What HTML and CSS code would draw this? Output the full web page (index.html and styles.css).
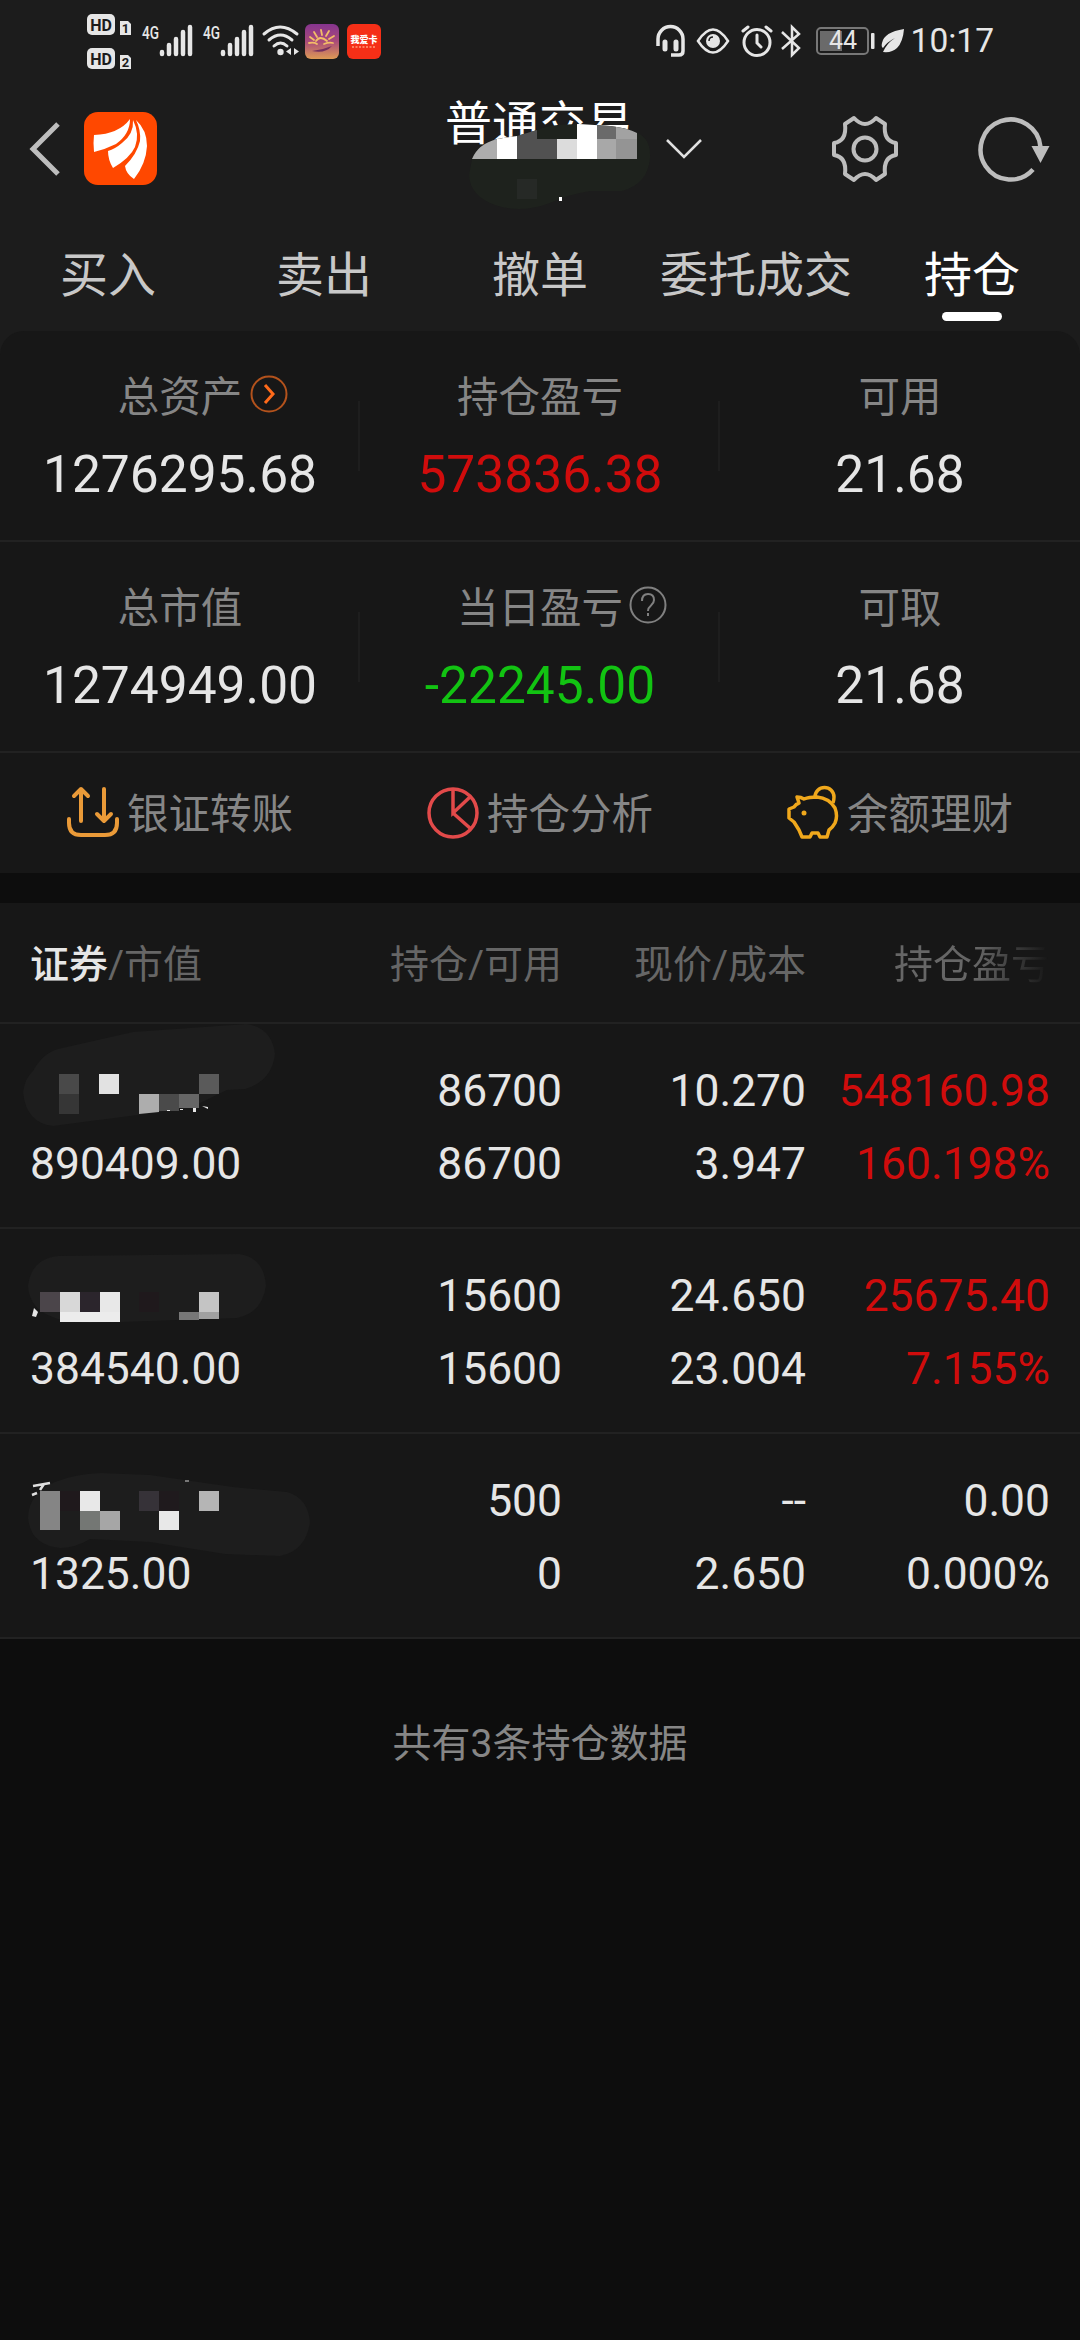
FILE: index.html
```html
<!DOCTYPE html>
<html lang="zh-CN">
<head>
    <meta charset="UTF-8">
    <meta name="viewport" content="width=device-width, initial-scale=1.0">
    <title>普通交易 - 持仓</title>
    <link rel="stylesheet" href="styles.css">
</head>
<body>
    <header>
        <div class="status-bar">
            <div class="status-left">
                <svg class="sim" width="46" height="60" viewBox="0 0 46 60">
                    <rect x="0" y="3" width="28" height="21" rx="5" fill="#e6e6e6"/>
                    <text x="14" y="19.500" class="hd">HD</text>
                    <path d="M33 10h8l3 3v11H33z" fill="#e6e6e6"/>
                    <text x="38.500" y="22" class="sim-no">1</text>
                    <rect x="0" y="37" width="28" height="21" rx="5" fill="#e6e6e6"/>
                    <text x="14" y="53.500" class="hd">HD</text>
                    <path d="M33 44h8l3 3v11H33z" fill="#e6e6e6"/>
                    <text x="38.500" y="56" class="sim-no">2</text>
                </svg>
                <svg class="signal" width="52" height="34" viewBox="0 0 52 34">
                    <text x="0" y="15" class="net" textLength="17" lengthAdjust="spacingAndGlyphs">4G</text>
                    <path d="M20 28v2M27 21v9M34 15v15M41 8v22M48 3v27"/>
                </svg>
                <svg class="signal" width="52" height="34" viewBox="0 0 52 34">
                    <text x="0" y="15" class="net" textLength="17" lengthAdjust="spacingAndGlyphs">4G</text>
                    <path d="M20 28v2M27 21v9M34 15v15M41 8v22M48 3v27"/>
                </svg>
                <svg class="wifi" width="38" height="34" viewBox="0 0 38 34">
                    <path d="M2 10q16-14 33 0M7 16q11.500-10 23 0M12 22q6.500-6 13 0" fill="none" stroke="#e6e6e6" stroke-width="3" stroke-linecap="round"/>
                    <circle cx="18.500" cy="28" r="3.200" fill="#e6e6e6"/>
                    <path d="M29 24v7l-5-3.500zM32 24v7l5-3.500z" fill="#e6e6e6"/>
                </svg>
                <svg width="34" height="35" viewBox="0 0 34 35">
                    <defs>
                        <linearGradient id="dusk" x1="0.500" y1="0" x2="0.500" y2="1">
                            <stop offset="0" stop-color="#86348f"/>
                            <stop offset="0.500" stop-color="#a94b79"/>
                            <stop offset="1" stop-color="#dd9a55"/>
                        </linearGradient>
                    </defs>
                    <rect width="34" height="35" rx="6" fill="url(#dusk)"/>
                    <path d="M5 13l4 3M9 8l3 5M16 6l1 5M24 7l-3 5M29 12l-5 3M4 19q5-1 8 1M11 17q4-6 11 0M19 20q5-2 9-1" fill="none" stroke="#f3bd67" stroke-width="1.800" stroke-linecap="round"/>
                    <path d="M7 27q10-1 20-5-7 8-20 5z" fill="#76305f"/>
                </svg>
                <svg class="badge-app" width="34" height="35" viewBox="0 0 34 35">
                    <rect width="34" height="35" rx="6" fill="#f52f17"/>
                    <text x="17" y="19" class="app-name" textLength="27">我爱卡</text>
                    <path d="M5 23h24" stroke="#ff9a7a" stroke-width="1.500" stroke-dasharray="2 1.500"/>
                </svg>
            </div>
            <div class="status-right">
                <svg width="30" height="34" viewBox="0 0 30 34" fill="none" stroke="#e6e6e6" stroke-width="3.500">
                    <path d="M2 22V15a12.500 12.500 0 0 1 25 0V27q0 4-4 4h-8"/>
                    <path d="M9 18v7M20 18v7" stroke-width="5" stroke-linecap="round"/>
                </svg>
                <svg class="eye" width="34" height="34" viewBox="0 0 34 34">
                    <path d="M2 17q15-23 30 0-15 23-30 0z" fill="none" stroke="#e6e6e6" stroke-width="2.500"/>
                    <circle cx="17" cy="17" r="7" fill="#e6e6e6"/>
                    <path d="M13 17q0-4 4-4" fill="none" stroke="#1c1c1c" stroke-width="1.500"/>
                </svg>
                <svg class="alarm" width="32" height="34" viewBox="0 0 32 34" fill="none" stroke="#e6e6e6" stroke-width="3" stroke-linecap="round">
                    <circle cx="16" cy="18.500" r="13"/>
                    <path d="M16 11v8l4 4M2 7l5-4M30 7l-5-4"/>
                </svg>
                <svg class="bluetooth" width="22" height="34" viewBox="0 0 22 34" fill="none" stroke="#e6e6e6" stroke-width="2.500">
                    <path d="M2 8l17 16-7 7V3l7 7L2 25"/>
                </svg>
                <svg class="battery" width="60" height="30" viewBox="0 0 60 30">
                    <rect x="1" y="2" width="51" height="26" rx="4" fill="none" stroke="#777" stroke-width="2"/>
                    <rect x="4" y="5" width="22" height="20" fill="#6a6a6a"/>
                    <rect x="55" y="7" width="3.500" height="16" rx="1" fill="#e6e6e6"/>
                    <text x="27" y="23" class="battery-text">44</text>
                </svg>
                <svg class="leaf" width="24" height="26" viewBox="0 0 24 26">
                    <path d="M23 1Q3 4 1 15q-1 4 1 5 4-6 12-10-8 5-12 14 9 1 14-4 6-6 7-19z" fill="#e6e6e6"/>
                </svg>
                <span class="time">10:17</span>
            </div>
        </div>

        <div class="nav">
            <svg class="back" width="30" height="56" viewBox="0 0 30 56">
                <path d="M28 3L3 28l25 25" fill="none" stroke="#bdbdbd" stroke-width="5"/>
            </svg>
            <svg class="logo" width="73" height="73" viewBox="0 0 73 73">
                <rect width="73" height="73" rx="14" fill="#ff4800"/>
                <path d="M10 23Q35 22 46 7 46 22 32 32 22 37 10 40 9 31 10 23z" fill="#fff"/>
                <path d="M49 8Q50 22 38 31 31 37 24 39 24 48 29 56 46 46 51 35 56 22 49 8z" fill="#fff"/>
                <path d="M52 8Q63 18 63 34 62 52 50 67 42 62 41 54 53 42 56 29 57 18 52 8z" fill="#fff"/>
            </svg>
            <h1>普通交易</h1>
            <svg class="chevron" width="38" height="22" viewBox="0 0 38 22">
                <path d="M2 2l17 17L36 2" fill="none" stroke="#e0e0e0" stroke-width="2.500"/>
            </svg>
            <svg class="gear" width="68" height="68" viewBox="-34 -34 68 68" fill="none" stroke="#bdbdbd" stroke-width="4" stroke-linejoin="round">
                <path d="M-11 -31Q0 -19 11 -31L20 -25Q18 -8 31 -6V6Q18 8 20 25L11 31Q0 19 -11 31L-20 25Q-18 8 -31 6V-6Q-18 -8 -20 -25Z"/>
                <circle r="11.500"/>
            </svg>
            <svg class="refresh" width="72" height="68" viewBox="0 0 72 68">
                <path d="M55 54.500A30 30 0 1 1 62.500 32" fill="none" stroke="#bdbdbd" stroke-width="4.500"/>
                <path d="M53.500 31h18l-9 17z" fill="#bdbdbd"/>
            </svg>
            <svg class="title-mask" width="184" height="92" viewBox="468 120 184 92">
                <defs>
                    <clipPath id="title-blob">
                        <path d="M472 159Q478 144 497 139L517 136 537 130Q550 124 579 124L610 126Q628 128 637 133 651 138 650 158 648 184 622 191L590 191Q570 194 550 203 520 214 495 205 470 196 469 175z"/>
                    </clipPath>
                </defs>
                <g clip-path="url(#title-blob)" shape-rendering="crispEdges">
                    <rect x="468" y="120" width="184" height="92" fill="#1e221d"/>
                    <rect x="468" y="120" width="29" height="39" fill="#adadad"/>
                    <rect x="497" y="120" width="20" height="39" fill="#fff"/>
                    <rect x="517" y="120" width="20" height="39" fill="#515151"/>
                    <rect x="537" y="139" width="20" height="20" fill="#515151"/>
                    <rect x="557" y="139" width="20" height="20" fill="#dcdcdc"/>
                    <rect x="577" y="120" width="20" height="39" fill="#fff"/>
                    <rect x="597" y="120" width="19" height="19" fill="#6a6a6a"/>
                    <rect x="597" y="139" width="19" height="20" fill="#a8a8a8"/>
                    <rect x="616" y="120" width="21" height="19" fill="#a2a2a2"/>
                    <rect x="616" y="139" width="21" height="20" fill="#949494"/>
                    <rect x="517" y="179" width="20" height="20" fill="#262926"/>
                </g>
                <rect x="559" y="197" width="3" height="4" fill="#fff"/>
            </svg>
        </div>

        <nav class="tabs">
            <a>买入</a>
            <a>卖出</a>
            <a>撤单</a>
            <a>委托成交</a>
            <a class="active">持仓</a>
        </nav>
    </header>

    <section class="summary">
        <div class="summary-row">
            <div class="cell">
                <div class="label">总资产
                    <svg class="label-icon more" width="38" height="38" viewBox="0 0 38 38" fill="none">
                        <circle cx="19" cy="19" r="17.500" stroke="#b3521c" stroke-width="2"/>
                        <path d="M15 10l8 9-8 9" stroke="#ff6a1a" stroke-width="3"/>
                    </svg>
                </div>
                <div class="value">1276295.68</div>
            </div>
            <div class="cell">
                <div class="label">持仓盈亏</div>
                <div class="value up">573836.38</div>
            </div>
            <div class="cell">
                <div class="label">可用</div>
                <div class="value">21.68</div>
            </div>
        </div>
        <div class="summary-row">
            <div class="cell">
                <div class="label">总市值</div>
                <div class="value">1274949.00</div>
            </div>
            <div class="cell">
                <div class="label">当日盈亏
                    <svg class="label-icon help" width="38" height="38" viewBox="0 0 38 38" fill="none" stroke="#808080" stroke-width="2">
                        <circle cx="19" cy="19" r="17.500"/>
                        <path d="M13 15q0-7 6-7t6 6q0 3-3 5.500t-3 5.500M19 27v3"/>
                    </svg>
                </div>
                <div class="value down">-22245.00</div>
            </div>
            <div class="cell">
                <div class="label">可取</div>
                <div class="value">21.68</div>
            </div>
        </div>
        <div class="actions">
            <div class="action">
                <svg width="52" height="54" viewBox="0 0 52 54" fill="none" stroke="#ea9a38" stroke-width="4" stroke-linecap="round" stroke-linejoin="round">
                    <path d="M14 35V3M7 10l7-7 7 7M37 3v32M30 28l7 7 7-7M2 33v4q0 12 12 12h24q12 0 12-12v-4"/>
                </svg>
                <span>银证转账</span>
            </div>
            <div class="action">
                <svg width="52" height="54" viewBox="0 0 52 54" fill="none" stroke="#e24a4a" stroke-width="3.500">
                    <circle cx="26" cy="27" r="24"/>
                    <path d="M26 3v24L43 11M26 27l18 16"/>
                </svg>
                <span>持仓分析</span>
            </div>
            <div class="action">
                <svg width="52" height="54" viewBox="0 0 52 54" fill="none" stroke="#f0a81c" stroke-width="3.500" stroke-linejoin="round">
                    <path d="M10 11q4 0 7 2 5-2 13-2 12 1 18 11 3 8 0 15-2 4-6 7l-2 7h-7l-2-4h-6l-2 4h-8l-3-7-5-8-5-4v-9l5-2q2-3 5-4z"/>
                    <path d="M28 11a9.500 9.500 0 0 1 19 0q0 3-1 6"/>
                    <circle cx="17" cy="27" r="2.500" fill="#f0a81c" stroke="none"/>
                </svg>
                <span>余额理财</span>
            </div>
        </div>
    </section>

    <section class="holdings">
        <div class="holdings-head">
            <span><b>证券</b>/市值</span>
            <span>持仓/可用</span>
            <span>现价/成本</span>
            <span class="faded">持仓盈亏</span>
        </div>

        <div class="holding">
            <svg class="name-mask" width="320" height="130" viewBox="0 0 320 130">
                <path d="M23 69Q25 55 33 48 43 30 58 26L133 9 247 1Q272 5 275 31 272 58 245 66L227 67 200 80 160 89 53 103Q26 100 23 69z" fill="#1d1d1d"/>
                <g shape-rendering="crispEdges">
                    <rect x="59" y="51" width="20" height="20" fill="#494949"/>
                    <rect x="59" y="71" width="20" height="20" fill="#363636"/>
                    <rect x="99" y="51" width="20" height="20" fill="#e2e2e2"/>
                    <rect x="159" y="71" width="20" height="17" fill="#4a4a4a"/>
                    <rect x="179" y="71" width="20" height="14" fill="#666"/>
                    <rect x="199" y="51" width="20" height="20" fill="#5a5a5a"/>
                </g>
                <path d="M139 71h20v18l-20 2z" fill="#adadad"/>
                <path d="M193 85h3v4h-3zM202 83l6 1v2zM167 87h3v1h-3zM180 86h3v1h-3z" fill="#e6e6e6"/>
            </svg>
            <div class="col name"><span></span><span>890409.00</span></div>
            <div class="col"><span>86700</span><span>86700</span></div>
            <div class="col"><span>10.270</span><span>3.947</span></div>
            <div class="col up"><span>548160.98</span><span>160.198%</span></div>
        </div>

        <div class="holding">
            <svg class="name-mask" width="320" height="130" viewBox="0 0 320 130">
                <path d="M28 58Q31 31 58 28L239 26Q264 29 266 58 262 85 237 90L90 95Q30 94 28 58z" fill="#1d1d1d"/>
                <g shape-rendering="crispEdges">
                    <rect x="40" y="64" width="20" height="20" fill="#4b454a"/>
                    <rect x="60" y="64" width="20" height="20" fill="#d8d8d8"/>
                    <rect x="80" y="64" width="20" height="20" fill="#2b252c"/>
                    <rect x="100" y="64" width="20" height="20" fill="#e8e8e8"/>
                    <rect x="60" y="84" width="60" height="10" fill="#ececec"/>
                    <rect x="139" y="64" width="20" height="20" fill="#1f191c"/>
                    <rect x="199" y="64" width="20" height="20" fill="#c4c4c4"/>
                    <rect x="179" y="84" width="20" height="8" fill="#777"/>
                    <rect x="199" y="84" width="20" height="7" fill="#a0a0a0"/>
                </g>
                <path d="M34 80l4 4-2 5-4-1z" fill="#e6e6e6"/>
            </svg>
            <div class="col name"><span></span><span>384540.00</span></div>
            <div class="col"><span>15600</span><span>15600</span></div>
            <div class="col"><span>24.650</span><span>23.004</span></div>
            <div class="col up"><span>25675.40</span><span>7.155%</span></div>
        </div>

        <div class="holding">
            <svg class="name-mask" width="320" height="130" viewBox="0 0 320 130">
                <path d="M28 84Q29 60 55 49 75 41 100 40L150 42 233 54 287 59Q308 65 310 89 306 118 280 123L225 121 150 109 90 106Q75 115 60 115 30 112 28 84z" fill="#1d1d1d"/>
                <g shape-rendering="crispEdges">
                    <rect x="40" y="58" width="20" height="39" fill="#858585"/>
                    <rect x="60" y="58" width="20" height="20" fill="#1f191c"/>
                    <rect x="80" y="58" width="20" height="20" fill="#e8e8e8"/>
                    <rect x="80" y="78" width="20" height="19" fill="#747774"/>
                    <rect x="100" y="78" width="20" height="19" fill="#a6a6a6"/>
                    <rect x="139" y="58" width="20" height="20" fill="#363238"/>
                    <rect x="159" y="58" width="20" height="20" fill="#1f1a1d"/>
                    <rect x="159" y="78" width="20" height="19" fill="#e8e8e8"/>
                    <rect x="199" y="58" width="20" height="20" fill="#b5b5b5"/>
                </g>
                <path d="M33 53l17-3M44 51l-4 6M32 62l5-2" fill="none" stroke="#dedede" stroke-width="2.500"/>
                <path d="M185 48h4" stroke="#777" stroke-width="2"/>
            </svg>
            <div class="col name"><span></span><span>1325.00</span></div>
            <div class="col"><span>500</span><span>0</span></div>
            <div class="col"><span>--</span><span>2.650</span></div>
            <div class="col"><span>0.00</span><span>0.000%</span></div>
        </div>
    </section>

    <p class="total">共有3条持仓数据</p>
</body>
</html>
```

FILE: styles.css
```css
:root {
    --header: #1c1c1c;
    --panel: #171717;
    --background: #0d0d0d;
    --border: #222222;
    --text: #e6e6e6;
    --label: #868686;
    --muted: #666666;
    --up: #d00c0c;
    --down: #12c312;
}

* {
    margin: 0;
    padding: 0;
    box-sizing: border-box;
}

body {
    font-family: Roboto, "Noto Sans CJK SC", sans-serif;
    background-color: var(--background);
    color: var(--text);
    min-height: 100vh;
    font-weight: 400;
}

svg {
    display: block;
    flex: none;
    overflow: visible;
}

header {
    background-color: var(--header);
    height: 355px;
}

/* Status bar */
.status-bar {
    height: 82px;
    padding: 0 86px 0 87px;
    display: flex;
    justify-content: space-between;
    align-items: center;
}

.status-left,
.status-right {
    display: flex;
    align-items: center;
}

.sim {
    margin-right: 9px;
}

.hd {
    font-size: 16px;
    font-weight: 700;
    text-anchor: middle;
    fill: #1c1c1c;
}

.sim-no {
    font-size: 13px;
    font-weight: 700;
    text-anchor: middle;
    fill: #1c1c1c;
}

.signal {
    margin-right: 9px;
}

.signal path {
    fill: none;
    stroke: #e6e6e6;
    stroke-width: 4.5;
    stroke-linecap: round;
}

.net {
    font-size: 18px;
    font-weight: 500;
    fill: #e6e6e6;
}

.wifi {
    margin-right: 5px;
    margin-left: -2px;
}

.badge-app {
    margin-left: 8px;
}

.app-name {
    font-size: 9px;
    font-weight: 900;
    text-anchor: middle;
    fill: #ffffff;
}

.eye {
    margin-left: 10px;
}

.alarm {
    margin-left: 11px;
}

.bluetooth {
    margin-left: 7px;
}

.battery {
    margin-left: 14px;
}

.battery-text {
    font-size: 25px;
    text-anchor: middle;
    fill: #e6e6e6;
}

.leaf {
    margin-left: 5px;
}

.time {
    margin-left: 6px;
    font-size: 33.5px;
    line-height: 40px;
}

/* Title bar */
.nav {
    position: relative;
    height: 133px;
    padding: 0 30px;
    display: flex;
    align-items: center;
}

.logo {
    margin-left: 24px;
}

h1 {
    width: 188px;
    margin-left: 288px;
    margin-bottom: 50px;
    font-size: 47px;
    line-height: 56px;
    font-weight: 400;
    color: #ffffff;
    white-space: nowrap;
    flex: none;
}

.chevron {
    margin-left: 32px;
}

.gear {
    margin-left: auto;
}

.refresh {
    margin-left: 79px;
}

.title-mask {
    position: absolute;
    left: 468px;
    top: 38px;
}

/* Tabs */
.tabs {
    display: grid;
    grid-template-columns: repeat(5, 1fr);
    height: 116px;
}

.tabs a {
    display: flex;
    flex-direction: column;
    align-items: center;
    padding-top: 31px;
    font-size: 48px;
    line-height: 60px;
    color: #c8c8c8;
}

.tabs .active {
    color: #ffffff;
}

.tabs .active::after {
    content: "";
    width: 60px;
    height: 9px;
    margin-top: 6px;
    border-radius: 5px;
    background-color: #ffffff;
}

/* Account summary */
.summary {
    margin-top: -24px;
    border-radius: 24px 24px 0 0;
    background-color: var(--panel);
}

.summary-row {
    display: grid;
    grid-template-columns: repeat(3, 1fr);
    height: 211px;
    border-bottom: 2px solid var(--border);
}

.cell {
    display: flex;
    flex-direction: column;
    align-items: center;
    padding-top: 42px;
    background: linear-gradient(#1e1e1e, #1e1e1e) right 70px / 2px 70px no-repeat;
}

.cell:last-child {
    background: none;
}

.label {
    position: relative;
    font-size: 41.5px;
    line-height: 50px;
    color: var(--label);
}

.label-icon {
    position: absolute;
    left: 100%;
    top: 2px;
}

.more {
    margin-left: 8px;
}

.help {
    margin-left: 6px;
}

.value {
    margin-top: 21px;
    font-size: 51.5px;
    line-height: 62px;
}

.up {
    color: var(--up);
}

.down {
    color: var(--down);
}

.actions {
    display: grid;
    grid-template-columns: repeat(3, 1fr);
    height: 120px;
}

.action {
    display: flex;
    justify-content: center;
    align-items: center;
    gap: 8px;
    font-size: 41.5px;
    line-height: 50px;
    color: var(--label);
}

.action span {
    padding-top: 3px;
}

/* Holdings */
.holdings {
    margin-top: 30px;
    background-color: var(--panel);
}

.holdings-head,
.holding {
    display: grid;
    grid-template-columns: 290px 242px 244px 244px;
    padding: 0 30px;
    border-bottom: 2px solid var(--border);
}

.holdings-head {
    height: 121px;
    padding-top: 4px;
    align-items: center;
    text-align: right;
    font-size: 39px;
    line-height: 50px;
    color: var(--muted);
}

.holdings-head span:first-child {
    text-align: left;
}

.holdings-head b {
    font-weight: 500;
    color: var(--text);
}

.holdings-head .faded {
    color: transparent;
    background: linear-gradient(to right, #666666 70%, #171717 99%);
    background-clip: text;
    -webkit-background-clip: text;
}

.holding {
    position: relative;
    height: 205px;
    padding-top: 31px;
}

.col {
    display: flex;
    flex-direction: column;
    text-align: right;
    font-size: 44.4px;
    line-height: 73px;
}

.col span {
    height: 73px;
}

.name {
    text-align: left;
}

.name-mask {
    position: absolute;
    left: 0;
    top: -1px;
}

.total {
    margin-top: 80px;
    text-align: center;
    font-size: 39px;
    line-height: 50px;
    color: var(--label);
}
```
